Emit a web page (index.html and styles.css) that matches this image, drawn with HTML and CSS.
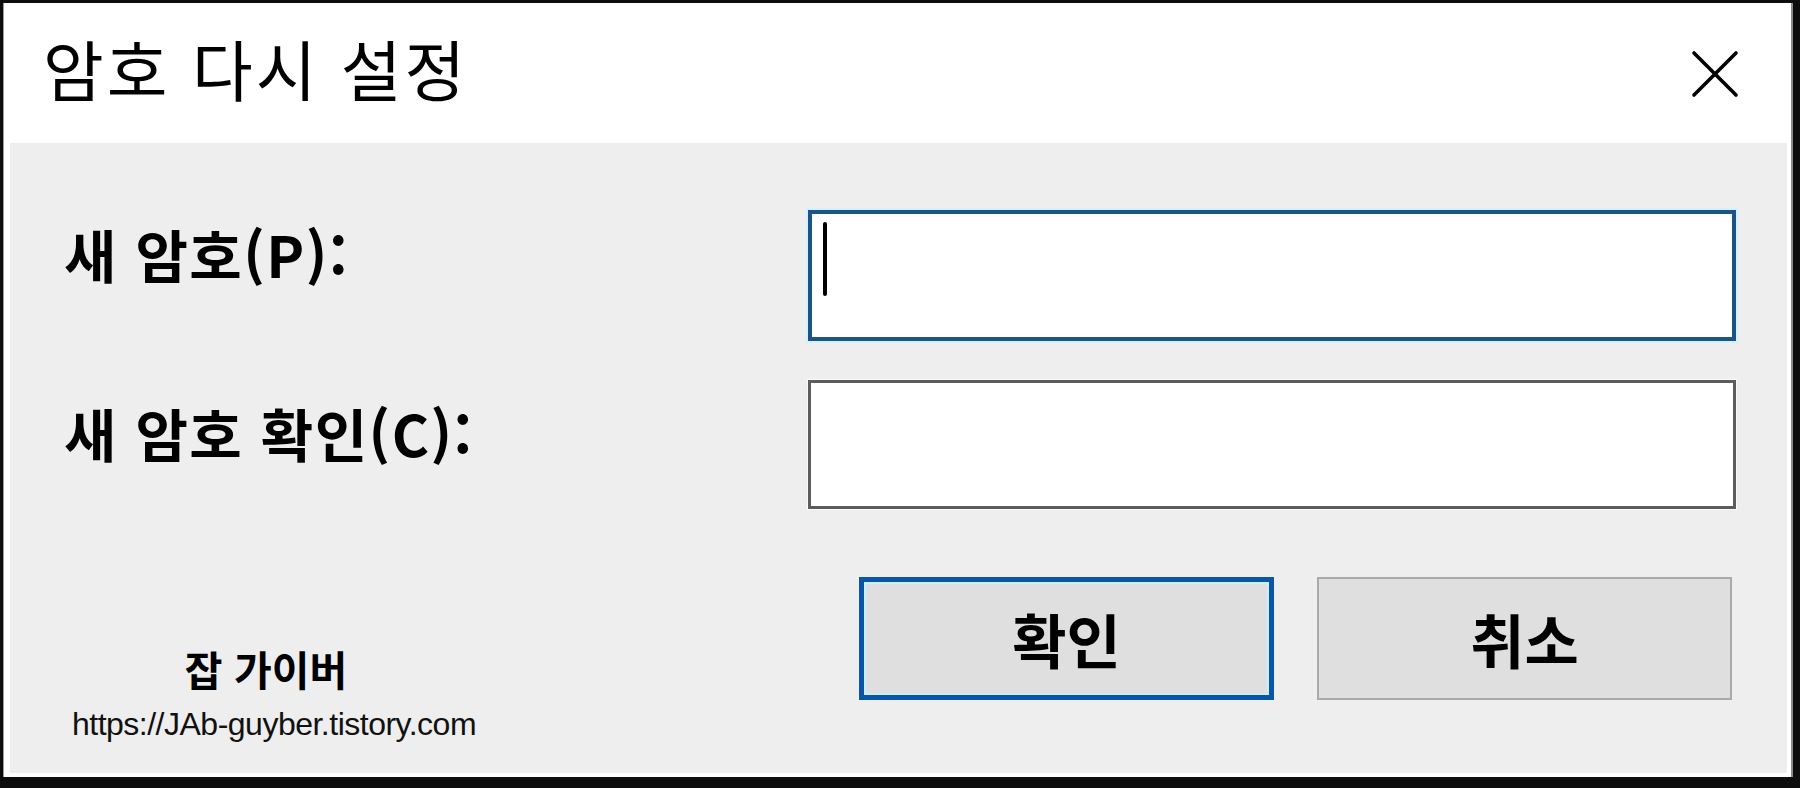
FILE: index.html
```html
<!DOCTYPE html>
<html lang="ko">
<head>
<meta charset="utf-8">
<title>암호 다시 설정</title>
<link rel="stylesheet" href="styles.css">
</head>
<body>
<div class="screen">
  <div class="window">
    <header class="titlebar">
      <h1 class="title">암호 다시 설정</h1>
      <button class="close" aria-label="닫기">
        <svg width="48" height="48" viewBox="0 0 48 48"><path d="M3 3 L45 45 M45 3 L3 45" stroke="#000" stroke-width="3.6" stroke-linecap="round" fill="none"/></svg>
      </button>
    </header>
    <main class="content">
      <label class="label label-first">새 암호(P):</label>
      <div class="field field-focus"><span class="caret"></span></div>
      <label class="label label-second">새 암호 확인(C):</label>
      <div class="field field-idle"></div>
      <div class="watermark">
        <div class="wm-name">잡 가이버</div>
        <div class="wm-url">https://JAb-guyber.tistory.com</div>
      </div>
      <div class="buttons">
        <button class="btn btn-default">확인</button>
        <button class="btn">취소</button>
      </div>
    </main>
  </div>
</div>
</body>
</html>
```
FILE: styles.css
```css
html, body {
  margin: 0;
  padding: 0;
  background: #0d0d0d;
}
.screen {
  width: 1800px;
  height: 788px;
  box-sizing: border-box;
  padding: 3px 7px 11px 3px;
  background: #0d0d0d;
}
.window {
  height: 100%;
  box-sizing: border-box;
  background: #ffffff;
  display: flex;
  flex-direction: column;
  padding: 0 4px 4px 6px;
  border-left: 1px solid #9a9a9a;
  border-right: 2px solid #8a8a8a;
  font-family: "Noto Sans CJK KR", "Noto Sans", sans-serif;
  color: #000;
}
.titlebar {
  height: 140px;
  flex: none;
  display: flex;
  align-items: flex-start;
  justify-content: space-between;
}
.title {
  margin: 22px 0 0 33px;
  font-size: 66px;
  font-weight: 400;
  line-height: 84px;
  letter-spacing: 3px;
}
.close {
  margin: 47px 48px 0 0;
  padding: 0;
  border: 0;
  background: transparent;
  width: 48px;
  height: 48px;
  display: block;
}
.close svg { display: block; }
.content {
  flex: 1;
  background: #eeeeee;
  display: grid;
  grid-template-columns: 744px 1fr;
  grid-template-rows: 131px 129px 123px;
  row-gap: 39px;
  padding: 67px 51px 0 54px;
  align-content: start;
}
.label {
  font-size: 57px;
  font-weight: 700;
  line-height: 66px;
  letter-spacing: 1.5px;
  align-self: start;
}
.label-first { margin-top: 10px; }
.label-second { margin-top: 19px; }
.field {
  box-sizing: border-box;
  background: #ffffff;
  padding: 8px 11px;
}
.field-focus {
  border: 4px solid #1c5585;
  box-shadow: 0 0 0 2px #d2f2ff;
}
.field-idle {
  border: 3px solid #5c5c5c;
  box-shadow: 0 0 0 1px #fafafa;
}
.caret {
  display: block;
  width: 4px;
  height: 74px;
  background: #000;
  border-radius: 2px;
}
.buttons {
  margin-top: 29px;
  display: flex;
  justify-content: flex-end;
  gap: 43px;
  padding-right: 4px;
}
.btn {
  width: 415px;
  height: 123px;
  box-sizing: border-box;
  background: #dfdfdf;
  border: 2px solid #a9a9a9;
  font-family: "Noto Sans CJK KR", "Noto Sans", sans-serif;
  font-size: 59px;
  font-weight: 700;
  color: #000;
  padding: 0;
}
.btn-default {
  border: 5px solid #0a55a6;
  box-shadow: inset 0 0 0 2px #c6efff;
}
.watermark {
  align-self: start;
  margin-top: 97px;
  margin-left: 0;
  width: 420px;
  display: flex;
  flex-direction: column;
  align-items: center;
}
.wm-name {
  font-size: 41px;
  font-weight: 700;
  line-height: 46px;
  margin-left: -16px;
}
.wm-url {
  font-family: "Liberation Sans", Arial, sans-serif;
  font-size: 32px;
  line-height: 36px;
  margin-top: 15px;
  color: #111;
  letter-spacing: -0.5px;
}
```
